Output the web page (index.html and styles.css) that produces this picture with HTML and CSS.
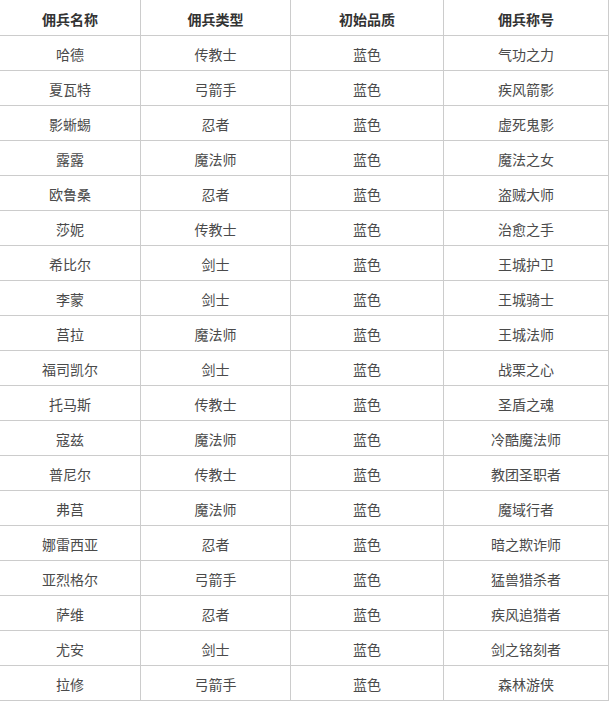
FILE: index.html
```html
<!DOCTYPE html>
<html lang="zh-CN">
<head>
<meta charset="utf-8">
<title>佣兵列表</title>
<link rel="stylesheet" href="styles.css">
</head>
<body>
<table class="merc-table">
  <colgroup>
    <col class="c1"><col class="c2"><col class="c3"><col class="c4">
  </colgroup>
  <thead>
    <tr><th>佣兵名称</th><th>佣兵类型</th><th>初始品质</th><th>佣兵称号</th></tr>
  </thead>
  <tbody>
    <tr><td>哈德</td><td>传教士</td><td>蓝色</td><td>气功之力</td></tr>
    <tr><td>夏瓦特</td><td>弓箭手</td><td>蓝色</td><td>疾风箭影</td></tr>
    <tr><td>影蜥蜴</td><td>忍者</td><td>蓝色</td><td>虚死鬼影</td></tr>
    <tr><td>露露</td><td>魔法师</td><td>蓝色</td><td>魔法之女</td></tr>
    <tr><td>欧鲁桑</td><td>忍者</td><td>蓝色</td><td>盗贼大师</td></tr>
    <tr><td>莎妮</td><td>传教士</td><td>蓝色</td><td>治愈之手</td></tr>
    <tr><td>希比尔</td><td>剑士</td><td>蓝色</td><td>王城护卫</td></tr>
    <tr><td>李蒙</td><td>剑士</td><td>蓝色</td><td>王城骑士</td></tr>
    <tr><td>莒拉</td><td>魔法师</td><td>蓝色</td><td>王城法师</td></tr>
    <tr><td>福司凯尔</td><td>剑士</td><td>蓝色</td><td>战栗之心</td></tr>
    <tr><td>托马斯</td><td>传教士</td><td>蓝色</td><td>圣盾之魂</td></tr>
    <tr><td>寇兹</td><td>魔法师</td><td>蓝色</td><td>冷酷魔法师</td></tr>
    <tr><td>普尼尔</td><td>传教士</td><td>蓝色</td><td>教团圣职者</td></tr>
    <tr><td>弗莒</td><td>魔法师</td><td>蓝色</td><td>魔域行者</td></tr>
    <tr><td>娜雷西亚</td><td>忍者</td><td>蓝色</td><td>暗之欺诈师</td></tr>
    <tr><td>亚烈格尔</td><td>弓箭手</td><td>蓝色</td><td>猛兽猎杀者</td></tr>
    <tr><td>萨维</td><td>忍者</td><td>蓝色</td><td>疾风追猎者</td></tr>
    <tr><td>尤安</td><td>剑士</td><td>蓝色</td><td>剑之铭刻者</td></tr>
    <tr><td>拉修</td><td>弓箭手</td><td>蓝色</td><td>森林游侠</td></tr>
  </tbody>
</table>
</body>
</html>
```
FILE: styles.css
```css
html, body {
  margin: 0;
  padding: 0;
  background: #fff;
}

.merc-table {
  width: 609px;
  table-layout: fixed;
  border-collapse: separate;
  border-spacing: 0;
  font-family: "Noto Sans CJK SC", "Liberation Sans", sans-serif;
  font-size: 14px;
  color: #4a4a4a;
}

.c1 { width: 141px; }
.c2 { width: 150px; }
.c3 { width: 153px; }
.c4 { width: 165px; }

.merc-table th,
.merc-table td {
  box-sizing: border-box;
  height: 35px;
  padding: 2px 0 0;
  text-align: center;
  vertical-align: middle;
  border-right: 1px solid #cccccc;
  border-bottom: 1px solid #cccccc;
  line-height: 20px;
  white-space: nowrap;
}

.merc-table th {
  height: 36px;
  font-weight: bold;
  color: #333;
}
```
